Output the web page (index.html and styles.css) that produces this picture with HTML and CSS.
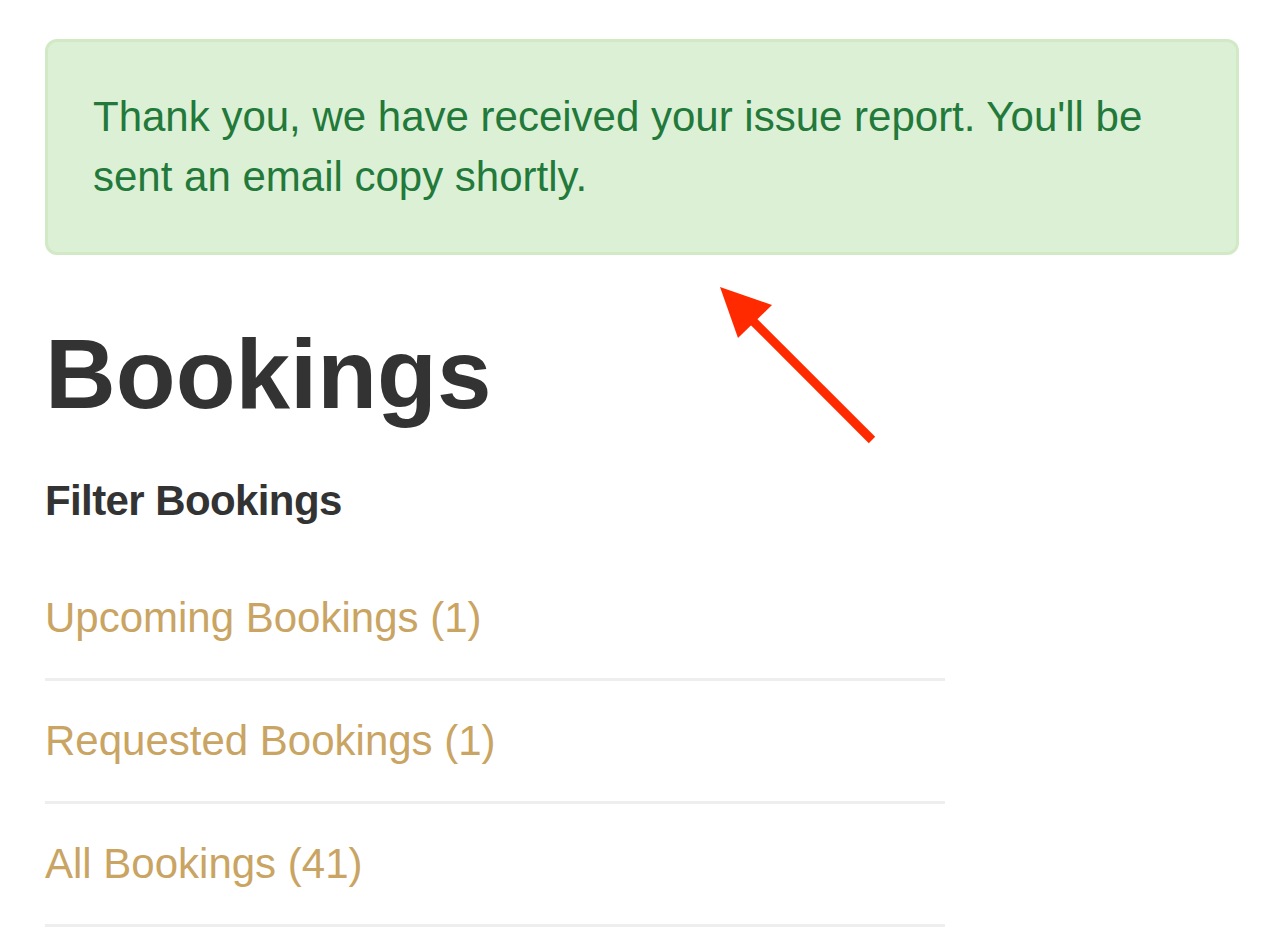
FILE: index.html
```html
<!DOCTYPE html>
<html>
<head>
<meta charset="utf-8">
<link rel="stylesheet" href="styles.css">
</head>
<body>
<div class="container">
  <div class="alert">Thank you, we have received your issue report. You'll be sent an email copy shortly.</div>
  <h1 class="title">Bookings</h1>
  <div class="filter-label">Filter Bookings</div>
  <ul class="filter-list">
    <li><a href="#">Upcoming Bookings (1)</a></li>
    <li><a href="#">Requested Bookings (1)</a></li>
    <li><a href="#">All Bookings (41)</a></li>
  </ul>
</div>
<svg class="arrow" width="180" height="180" viewBox="0 0 180 180">
  <line x1="168" y1="156" x2="40" y2="28" stroke="#ff2a00" stroke-width="9"/>
  <polygon points="16,3 68,21 34,54" fill="#ff2a00"/>
</svg>
</body>
</html>
```
FILE: styles.css
```css
html, body {
  margin: 0;
  padding: 0;
  background: #fff;
}
body {
  font-family: "Liberation Sans", Arial, Helvetica, sans-serif;
  font-size: 42px;
  line-height: 60px;
  color: #333;
}
.container {
  padding: 39px 45px 0 45px;
}
.alert {
  background: #dcf0d6;
  border: 3px solid #d2e9c6;
  border-radius: 12px;
  color: #22793a;
  padding: 45px;
  margin-bottom: 60px;
}
.title {
  font-size: 98px;
  line-height: 119px;
  font-weight: bold;
  letter-spacing: 0;
  margin: 0 0 37px 0;
  color: #333;
}
.filter-label {
  font-weight: bold;
  letter-spacing: -0.6px;
  margin-bottom: 27px;
}
.filter-list {
  list-style: none;
  margin: 0;
  padding: 0;
  width: 900px;
}
.filter-list li {
  padding: 30px 0;
  border-bottom: 3px solid #eeeeee;
}
.filter-list a {
  color: #c9a462;
  text-decoration: none;
}
.arrow {
  position: absolute;
  left: 704px;
  top: 284px;
}
```
